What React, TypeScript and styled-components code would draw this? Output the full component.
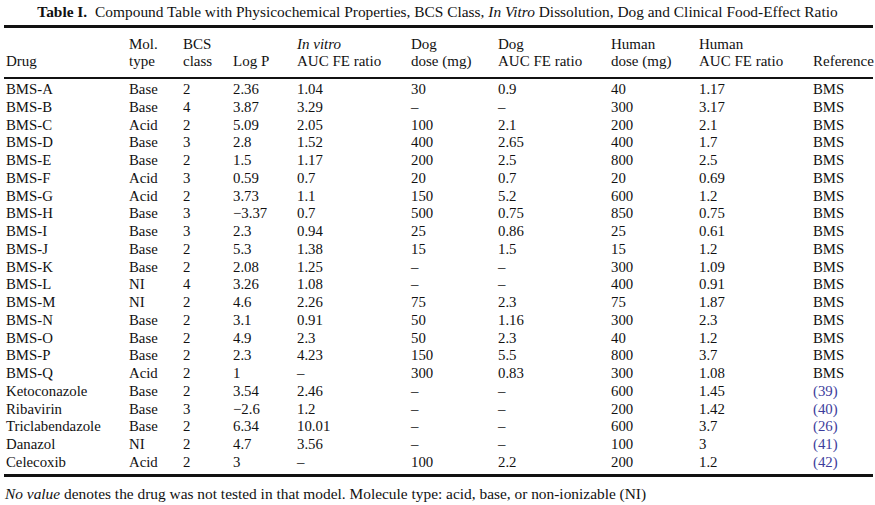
import styled, { createGlobalStyle } from "styled-components";

const GlobalStyle = createGlobalStyle`
	html, body {
		margin: 0;
		padding: 0;
		background: #ffffff;
	}
	body {
		font-family: "Liberation Serif", "Times New Roman", serif;
		color: #111111;
	}
`;

const Page = styled.div`
	width: 875px;
	height: 505px;
	box-sizing: border-box;
	padding: 3px 2px 0 4px;
	display: flex;
	flex-direction: column;
	overflow: hidden;
`;

const Caption = styled.div`
	font-size: 15.4px;
	line-height: 17px;
	text-align: center;
	padding-right: 2px;
	white-space: nowrap;
	b {
		font-weight: bold;
		margin-right: 4px;
	}
`;

const Table = styled.table`
	margin-top: 5px;
	width: 869px;
	border-collapse: collapse;
	table-layout: fixed;
	border-top: 3px solid #111;
	border-bottom: 3px solid #111;
	font-size: 14.8px;
`;

const HeadRow = styled.tr`
	border-bottom: 2px solid #111;
`;

const Th = styled.th`
	font-weight: normal;
	font-size: 15px;
	text-align: left;
	vertical-align: bottom;
	padding: 8px 0 7px 2px;
	line-height: 17px;
	white-space: nowrap;
	i {
		font-style: italic;
	}
`;

const Td = styled.td<{ $first?: boolean; $last?: boolean }>`
	padding: ${(p) => (p.$first ? "2px" : "0")} 0 ${(p) => (p.$last ? "2px" : "0")} 2px;
	height: 17.75px;
	line-height: 17.75px;
	white-space: nowrap;
`;

const Ref = styled.span<{ $cite: boolean }>`
	color: ${(p) => (p.$cite ? "#3d3d9c" : "inherit")};
`;

const Note = styled.div`
	margin-top: 8px;
	padding-left: 1px;
	font-size: 15.4px;
	line-height: 17px;
	white-space: nowrap;
`;

const widths = [123, 54, 50, 64, 114, 87, 113, 88, 114, 62];

type Row = [string, string, string, string, string, string, string, string, string, string];

const rows: Row[] = [
	["BMS-A", "Base", "2", "2.36", "1.04", "30", "0.9", "40", "1.17", "BMS"],
	["BMS-B", "Base", "4", "3.87", "3.29", "–", "–", "300", "3.17", "BMS"],
	["BMS-C", "Acid", "2", "5.09", "2.05", "100", "2.1", "200", "2.1", "BMS"],
	["BMS-D", "Base", "3", "2.8", "1.52", "400", "2.65", "400", "1.7", "BMS"],
	["BMS-E", "Base", "2", "1.5", "1.17", "200", "2.5", "800", "2.5", "BMS"],
	["BMS-F", "Acid", "3", "0.59", "0.7", "20", "0.7", "20", "0.69", "BMS"],
	["BMS-G", "Acid", "2", "3.73", "1.1", "150", "5.2", "600", "1.2", "BMS"],
	["BMS-H", "Base", "3", "−3.37", "0.7", "500", "0.75", "850", "0.75", "BMS"],
	["BMS-I", "Base", "3", "2.3", "0.94", "25", "0.86", "25", "0.61", "BMS"],
	["BMS-J", "Base", "2", "5.3", "1.38", "15", "1.5", "15", "1.2", "BMS"],
	["BMS-K", "Base", "2", "2.08", "1.25", "–", "–", "300", "1.09", "BMS"],
	["BMS-L", "NI", "4", "3.26", "1.08", "–", "–", "400", "0.91", "BMS"],
	["BMS-M", "NI", "2", "4.6", "2.26", "75", "2.3", "75", "1.87", "BMS"],
	["BMS-N", "Base", "2", "3.1", "0.91", "50", "1.16", "300", "2.3", "BMS"],
	["BMS-O", "Base", "2", "4.9", "2.3", "50", "2.3", "40", "1.2", "BMS"],
	["BMS-P", "Base", "2", "2.3", "4.23", "150", "5.5", "800", "3.7", "BMS"],
	["BMS-Q", "Acid", "2", "1", "–", "300", "0.83", "300", "1.08", "BMS"],
	["Ketoconazole", "Base", "2", "3.54", "2.46", "–", "–", "600", "1.45", "(39)"],
	["Ribavirin", "Base", "3", "−2.6", "1.2", "–", "–", "200", "1.42", "(40)"],
	["Triclabendazole", "Base", "2", "6.34", "10.01", "–", "–", "600", "3.7", "(26)"],
	["Danazol", "NI", "2", "4.7", "3.56", "–", "–", "100", "3", "(41)"],
	["Celecoxib", "Acid", "2", "3", "–", "100", "2.2", "200", "1.2", "(42)"],
];

export default function App() {
	return (
		<>
			<GlobalStyle />
			<Page>
				<Caption>
					<b>Table I.</b> Compound Table with Physicochemical Properties, BCS Class,{" "}
					<i>In Vitro</i> Dissolution, Dog and Clinical Food-Effect Ratio
				</Caption>
				<Table>
					<colgroup>
						{widths.map((w, i) => (
							<col key={i} style={{ width: w }} />
						))}
					</colgroup>
					<thead>
						<HeadRow>
							<Th>Drug</Th>
							<Th>
								Mol.
								<br />
								type
							</Th>
							<Th>
								BCS
								<br />
								class
							</Th>
							<Th>Log P</Th>
							<Th>
								<i>In vitro</i>
								<br />
								AUC FE ratio
							</Th>
							<Th>
								Dog
								<br />
								dose (mg)
							</Th>
							<Th>
								Dog
								<br />
								AUC FE ratio
							</Th>
							<Th>
								Human
								<br />
								dose (mg)
							</Th>
							<Th>
								Human
								<br />
								AUC FE ratio
							</Th>
							<Th>Reference</Th>
						</HeadRow>
					</thead>
					<tbody>
						{rows.map((r, ri) => (
							<tr key={r[0]}>
								{r.map((cell, ci) => (
									<Td key={ci} $first={ri === 0} $last={ri === rows.length - 1}>
										{ci === 9 ? <Ref $cite={cell.startsWith("(")}>{cell}</Ref> : cell}
									</Td>
								))}
							</tr>
						))}
					</tbody>
				</Table>
				<Note>
					<i>No value</i> denotes the drug was not tested in that model. Molecule type: acid, base, or
					non-ionizable (NI)
				</Note>
			</Page>
		</>
	);
}
